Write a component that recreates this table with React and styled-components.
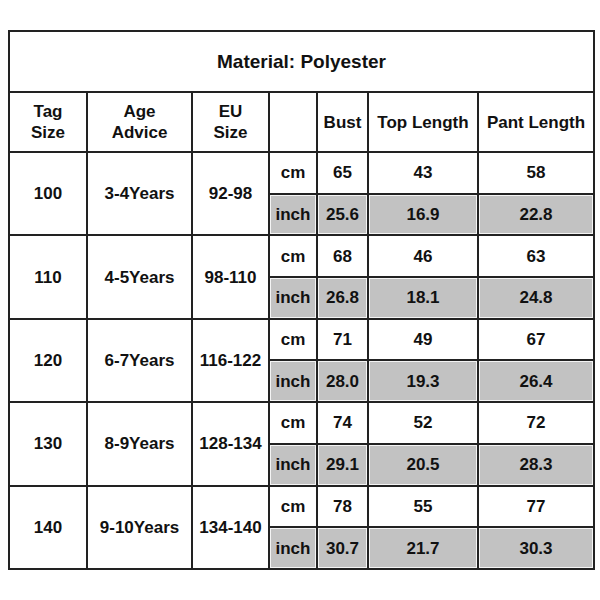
import React from "react";
import styled, { createGlobalStyle } from "styled-components";

const GlobalStyle = createGlobalStyle`
  html, body {
    margin: 0;
    padding: 0;
    background: #ffffff;
  }
  body {
    font-family: "Liberation Sans", Arial, sans-serif;
  }
`;

const Page = styled.div`
  width: 600px;
  height: 600px;
  padding: 30px 0 0 8px;
  box-sizing: border-box;
`;

const Chart = styled.table`
  width: 585px;
  table-layout: fixed;
  border-collapse: collapse;
  color: #111;
  font-weight: bold;
  font-size: 17px;
`;

const Cell = styled.td`
  border: 2px solid #222;
  text-align: center;
  vertical-align: middle;
  padding: 0;
  line-height: 21px;
  height: ${p => p.h || 40}px;
  background: ${p => (p.shade ? "#c2c2c2" : "#ffffff")};
  box-shadow: ${p => (p.shade ? "inset 0 0 0 1px #f4f4f4" : "none")};
`;

const Title = styled(Cell)`
  font-size: 19px;
  height: 59px;
`;

const COLS = [78, 105, 77, 48, 51, 110, 116];

const SIZES = [
  { tag: "100", age: "3-4Years", eu: "92-98", cm: [65, 43, 58], inch: ["25.6", "16.9", "22.8"] },
  { tag: "110", age: "4-5Years", eu: "98-110", cm: [68, 46, 63], inch: ["26.8", "18.1", "24.8"] },
  { tag: "120", age: "6-7Years", eu: "116-122", cm: [71, 49, 67], inch: ["28.0", "19.3", "26.4"] },
  { tag: "130", age: "8-9Years", eu: "128-134", cm: [74, 52, 72], inch: ["29.1", "20.5", "28.3"] },
  { tag: "140", age: "9-10Years", eu: "134-140", cm: [78, 55, 77], inch: ["30.7", "21.7", "30.3"] }
];

const SizeGroup = ({ row }) => (
  <>
    <tr>
      <Cell rowSpan={2}>{row.tag}</Cell>
      <Cell rowSpan={2}>{row.age}</Cell>
      <Cell rowSpan={2}>{row.eu}</Cell>
      <Cell h={39.7}>cm</Cell>
      {row.cm.map((v, i) => (
        <Cell key={i} h={39.7}>{v}</Cell>
      ))}
    </tr>
    <tr>
      <Cell shade h={39.7}>inch</Cell>
      {row.inch.map((v, i) => (
        <Cell key={i} shade h={39.7}>{v}</Cell>
      ))}
    </tr>
  </>
);

export default function App() {
  return (
    <Page>
      <GlobalStyle />
      <Chart>
        <colgroup>
          {COLS.map((w, i) => (
            <col key={i} style={{ width: w }} />
          ))}
        </colgroup>
        <tbody>
          <tr>
            <Title colSpan={7}>Material: Polyester</Title>
          </tr>
          <tr>
            <Cell h={58}>Tag<br />Size</Cell>
            <Cell h={58}>Age<br />Advice</Cell>
            <Cell h={58}>EU<br />Size</Cell>
            <Cell h={58} />
            <Cell h={58}>Bust</Cell>
            <Cell h={58}>Top Length</Cell>
            <Cell h={58}>Pant Length</Cell>
          </tr>
          {SIZES.map(row => (
            <SizeGroup key={row.tag} row={row} />
          ))}
        </tbody>
      </Chart>
    </Page>
  );
}
